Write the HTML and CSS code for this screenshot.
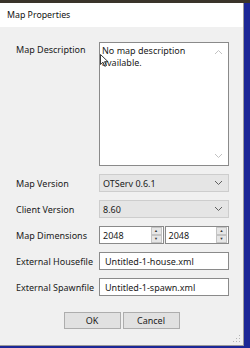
FILE: index.html
```html
<!DOCTYPE html>
<html lang="en">
<head>
    <meta charset="UTF-8">
    <title>Map Properties</title>
    <link rel="stylesheet" href="styles.css">
</head>
<body>
    <div class="dialog">
        <!-- Title bar -->
        <div class="titlebar">Map Properties</div>

        <div class="form">
            <label class="label label-top">Map Description</label>
            <div class="textarea">
                <p>No map description available.</p>
                <svg class="scroll-up" width="9" height="6" viewBox="0 0 9 6"><polyline points="1,5 4.5,1.5 8,5" fill="none" stroke="#c2c2c2" stroke-width="1"/></svg>
                <svg class="scroll-down" width="9" height="6" viewBox="0 0 9 6"><polyline points="1,1 4.5,4.5 8,1" fill="none" stroke="#c2c2c2" stroke-width="1"/></svg>
                <svg class="cursor" width="9" height="13" viewBox="0 0 9 13"><path d="M0.5 0.5 L0.5 10.5 L3 8.2 L4.8 12.3 L6.3 11.6 L4.6 7.7 L8 7.7 Z" fill="#fff" stroke="#222" stroke-width="0.9" stroke-linejoin="round"/></svg>
            </div>

            <label class="label">Map Version</label>
            <div class="select">
                <span>OTServ 0.6.1</span>
                <svg width="9" height="6" viewBox="0 0 9 6"><polyline points="1,1 4.5,4.5 8,1" fill="none" stroke="#606060" stroke-width="1"/></svg>
            </div>

            <label class="label">Client Version</label>
            <div class="select">
                <span>8.60</span>
                <svg width="9" height="6" viewBox="0 0 9 6"><polyline points="1,1 4.5,4.5 8,1" fill="none" stroke="#606060" stroke-width="1"/></svg>
            </div>

            <label class="label">Map Dimensions</label>
            <div class="dims">
                <div class="spin">
                    <span>2048</span>
                    <div class="spin-btns">
                        <div class="spin-btn">&#9650;</div>
                        <div class="spin-btn">&#9660;</div>
                    </div>
                </div>
                <div class="spin">
                    <span>2048</span>
                    <div class="spin-btns">
                        <div class="spin-btn">&#9650;</div>
                        <div class="spin-btn">&#9660;</div>
                    </div>
                </div>
            </div>

            <label class="label">External Housefile</label>
            <div class="input">Untitled-1-house.xml</div>

            <label class="label">External Spawnfile</label>
            <div class="input">Untitled-1-spawn.xml</div>
        </div>

        <div class="buttons">
            <button class="btn">OK</button>
            <button class="btn">Cancel</button>
        </div>

        <div class="grip"></div>
    </div>
</body>
</html>
```

FILE: styles.css
```css
body {
    margin: 0;
    font-family: "Noto Sans", "Open Sans", sans-serif;
    font-size: 9px;
    color: #1a1a1a;
    background: linear-gradient(#3a342a 0 3px, #1c2796 3px);
    height: 348px;
    overflow: hidden;
}

.dialog {
    position: relative;
    margin-top: 3px;
    width: 243px;
    height: 342px;
    background-color: #f0f0f0;
    border-right: 1px solid #9a9a9a;
    border-bottom: 1px solid #9a9a9a;
}

.titlebar {
    height: 24px;
    background-color: #ffffff;
    padding-left: 7px;
    display: flex;
    align-items: center;
    font-size: 8.8px;
    color: #111;
}

.form {
    display: grid;
    grid-template-columns: 83px 130px;
    row-gap: 8px;
    padding: 15px 0 0 16px;
}

.label {
    display: flex;
    align-items: center;
    white-space: nowrap;
}

.label-top {
    align-items: flex-start;
    padding-top: 1px;
}

.textarea {
    position: relative;
    height: 122px;
    background-color: #fff;
    border: 1px solid #8a8a8a;
}

.textarea p {
    margin: 0;
    padding: 2px 22px 0 2px;
    line-height: 12px;
}

.scroll-up {
    position: absolute;
    right: 5px;
    top: 6px;
}

.scroll-down {
    position: absolute;
    right: 5px;
    bottom: 6px;
}

.cursor {
    position: absolute;
    left: 0;
    top: 11px;
}

.select {
    height: 16px;
    background-color: #e5e5e5;
    border: 1px solid #cdcdcd;
    display: flex;
    align-items: center;
    justify-content: space-between;
    padding: 0 5px 0 3px;
}

.dims {
    display: flex;
    gap: 1px;
}

.spin {
    height: 16px;
    width: 60px;
    background-color: #fff;
    border: 1px solid #8a8a8a;
    display: flex;
    align-items: center;
    justify-content: space-between;
    padding-left: 3px;
}

.spin-btns {
    display: flex;
    flex-direction: column;
    gap: 0;
    margin-right: 1px;
}

.spin-btn {
    width: 9px;
    height: 6px;
    background-color: #e6e6e6;
    border: 1px solid #c4c4c4;
    font-size: 4px;
    line-height: 6px;
    text-align: center;
    color: #333;
}

.input {
    height: 16px;
    background-color: #fff;
    border: 1px solid #8a8a8a;
    display: flex;
    align-items: center;
    padding-left: 5px;
}

.buttons {
    display: flex;
    justify-content: center;
    gap: 2px;
    margin-top: 16px;
}

.btn {
    width: 57px;
    height: 17px;
    background-color: #e1e1e1;
    border: 1px solid #adadad;
    font-family: inherit;
    font-size: 9px;
    color: #1a1a1a;
    padding: 0;
}

.grip {
    position: absolute;
    right: 3px;
    bottom: 3px;
    width: 8px;
    height: 8px;
    background-image: radial-gradient(circle, #b5b5b5 0.8px, transparent 1px);
    background-size: 3px 3px;
    clip-path: polygon(100% 0, 100% 100%, 0 100%);
}
```
